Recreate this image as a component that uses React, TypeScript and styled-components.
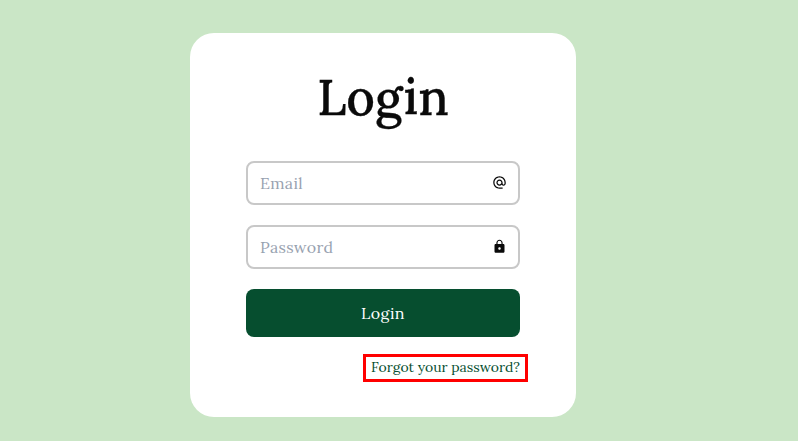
import React from "react";
import styled, { createGlobalStyle } from "styled-components";
import { MdAlternateEmail, MdLock } from "react-icons/md";

const Global = createGlobalStyle`
  *{box-sizing:border-box}
  body{margin:0;background:#cae6c6;font-family:Lora,"Noto Serif","DejaVu Serif","Liberation Serif",serif}
`;
const Page = styled.main`
  height:441px;padding:33px 0 0 190px;overflow:hidden;
`;
const Card = styled.form`
  width:386px;height:384px;padding:32px 56px 0;background:#fff;border-radius:24px;
  display:flex;flex-direction:column;
`;
const Title = styled.h1`
  margin:0 0 20px;height:76px;line-height:64px;font-size:49.5px;font-weight:500;text-align:center;color:#0a0a0a;
  -webkit-text-stroke:0.3px #0a0a0a;
`;
const Field = styled.label`
  display:flex;align-items:center;justify-content:space-between;height:44px;margin-bottom:20px;
  padding:0 11.5px 0 12px;border:2px solid #c8c8c8;border-radius:8px;color:#0a0a0a;
  svg{margin-top:-0.5px}
`;
const Input = styled.input`
  width:200px;padding:0;border:0;outline:0;background:none;letter-spacing:0.3px;
  font:450 16px/24px Lora,"Liberation Serif",serif;
  &::placeholder{color:#98a2b0;opacity:1}
`;
const Submit = styled.button`
  height:48px;border:0;border-radius:8px;background:#064e2f;color:#fff;letter-spacing:0.35px;
  font:450 16px/24px Lora,"Liberation Serif",serif;
`;
const Forgot = styled.a`
  align-self:flex-end;height:28px;margin:17.4px -7.5px 0 0;padding:0 4.5px 0 5px;border:3px solid #f00;
  font-size:14px;line-height:20px;color:#064e2f;white-space:nowrap;
`;

export default function App() {
  return <><Global /><Page><Card>
    <Title>Login</Title>
    <Field><Input placeholder="Email" /><MdAlternateEmail size={15} /></Field>
    <Field><Input type="password" placeholder="Password" /><MdLock size={15} /></Field>
    <Submit type="button">Login</Submit>
    <Forgot>Forgot your password?</Forgot>
  </Card></Page></>;
}
